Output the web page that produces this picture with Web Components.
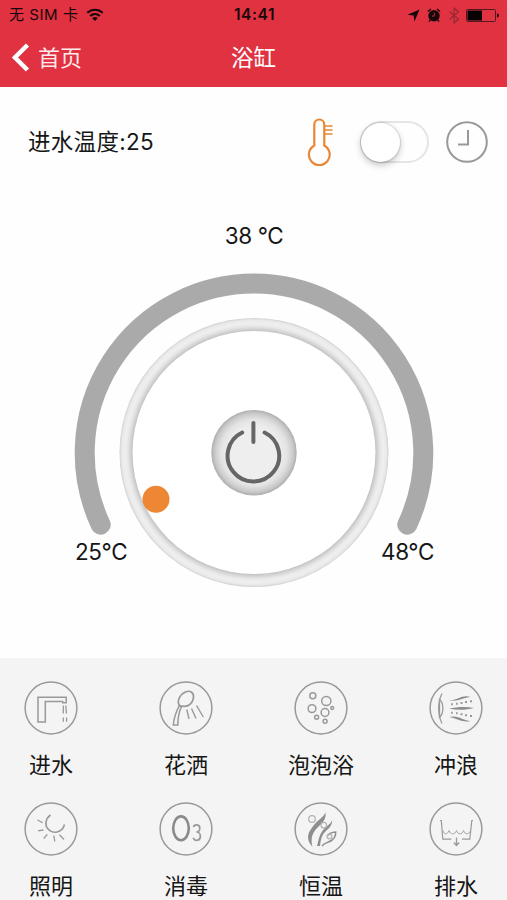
<!DOCTYPE html>
<html lang="zh-CN">
<head>
    <meta charset="UTF-8">
    <meta name="viewport" content="width=device-width, initial-scale=1.0">
    <title>浴缸</title>
    <style>
        body {
            margin: 0;
            background: #fff;
            overflow: hidden;
        }
    </style>
</head>
<body>
    <bath-app></bath-app>

    <script>
        // Small base: every component only has to give its markup and its styles
        class BaseElement extends HTMLElement {
            constructor() {
                super();
                this.attachShadow({ mode: 'open' });
            }
            render() {
                const template = document.createElement('template');
                template.innerHTML = `
                    <style>${this.getStyles()}</style>
                    ${this.getTemplate()}
                `;
                this.shadowRoot.replaceChildren(template.content.cloneNode(true));
            }
            connectedCallback() {
                this.render();
            }
        }

        // Glyphs inside the round buttons, drawn on a 54x54 box
        const icons = {
            faucet: `
                <path d="M14 41V16.300h28.200v5.500h-3.500v-1.300H21.300V41z" stroke-width="1.500"/>
                <path d="M39.300 24.500v8M41.800 24.500l.6 8M39.300 36.500v4.300M42.600 36.500v4.300"/>`,
            shower: `
                <path d="M20.500 24.500c-3.500-5 1.500-12 6.500-13.800 4.500-1.500 8 1 7.500 6-.6 5-5 9-9.500 8.700-2 0-3.500-.1-4.500-.9z" stroke-width="1.700"/>
                <path d="M20.300 24.500c-3 6-5.500 13-6 19.500h4.500c0-7 1-12.500 3.500-18z" stroke-width="1.500"/>
                <path d="M27.800 28.500l2.200 9.500M32.500 27.500l4.500 10M37.500 24.500l6.800 11.500" stroke-width="1.400"/>`,
            bubbles: `
                <g stroke-width="1.500">
                    <circle cx="18.800" cy="14.700" r="3"/><circle cx="32.300" cy="20" r="4.600"/>
                    <circle cx="18" cy="27.600" r="3.900"/><circle cx="31" cy="31.500" r="3.900"/>
                    <circle cx="38.200" cy="27" r="1.400"/><circle cx="22.600" cy="36.300" r="2"/>
                    <circle cx="31.100" cy="40.300" r="2"/>
                </g>`,
            surf: `
                <path d="M13 12.500c-4.500 9-4.500 20.500 0 30" stroke-width="1.200"/>
                <path d="M10.500 18.500c4.500 3.500 4.500 14 0 18z"/>
                <g fill="#8c8c8c" stroke="none">
                    <path d="M20 19c8 1 13-6 21.500-3-7 .2-12 5.300-21.500 3z"/>
                    <path d="M20 27.600c8-1.800 17-2.300 25-.6-8 2.200-17 2.300-25 .6z"/>
                    <path d="M20 36c9-2.500 14 3.500 21.500 4-7.500 2-13-2.500-21.500-4z"/>
                </g>
                <path d="M22 23.300h1.700M27 22.800h1.700M31.500 22h2M36 21h2M41 20.300h2M22 31.700h1.700M27 32.300h1.700M31.500 33.200h2M36 34.200h2M41 35h2" stroke-width="2"/>`,
            moon: `
                <path d="M26.500 13c-5 3.500-6 10-2.500 14 4.500 5 14 4.500 16.500-4.500" stroke-width="1.600"/>
                <path d="M13.500 18l5.200 2.800M14 28.800l5.500-.8M23.300 32.300l-3.500 4.200M29.800 33.500l1 6M35.500 32.800l4.500 4.700"/>`,
            ozone: `
                <ellipse cx="22" cy="26.300" rx="7.800" ry="11.900" stroke="#8a8a8a" stroke-width="2.600"/>
                <path d="M34.500 25c.8-3 6.300-3 6.300 1.200 0 2.500-1.800 3.800-3.400 3.800 2 0 4 1.500 4 4.200 0 5-6 5.300-7.200 1.600" stroke-width="1.700"/>`,
            heat: `
                <g fill="#8e8e8e" stroke="none">
                    <path d="M31.500 10.300c-1.500 5-8.500 8-12.500 14-3.500 4.500-5.500 8-4.700 13 .5 3 2 5.500 4.200 7.400-1.800-7-.8-12 3-17 5-5.500 11-8.500 10-17.400z"/>
                    <path d="M38.200 18c-1.500 4.500-6.700 6.500-9.900 11-3.500 5-3.800 10-5.300 15h3c.5-4 .8-8 3.300-12 3.200-4.500 9-6.500 8.900-14z"/>
                </g>
                <path d="M28 44c2.500-3.500 6-3.200 9.500-5.500 3-2 4.300-5 4.200-8.500-3.500.2-6.500 1.200-8.500 4" stroke="#8e8e8e" stroke-width="1.500"/>
                <g stroke="#b4b4b4">
                    <circle cx="18" cy="17" r="3.300"/><circle cx="29.800" cy="23.200" r="2.800"/><circle cx="35.500" cy="34.500" r="2.300"/>
                </g>`,
            drain: `
                <path d="M11 18.500h1.300l1.500 18.700h8.500M33 37.200h7.800l2-18.700h1.200" stroke-width="1.200"/>
                <path d="M14 28.500c1 4.500 4.500 4.500 6 0 1.500 4.500 6 4.500 7.500 0 1.500 4.500 5.500 4.500 7 0 1.500 4.500 5.500 4.500 7 0" stroke="#a8a8a8" stroke-width="1"/>
                <path d="M27.500 35.500v8M24.800 40.500l2.700 3 2.700-3"/>`
        };

        class StatusBar extends BaseElement {
            getTemplate() {
                return `
                    <div class="carrier">
                        <span>无 SIM 卡</span>
                        <svg width="18" height="14" viewBox="0 0 18 14" fill="none" stroke="#17070a" stroke-width="2.200">
                            <path d="M1.300 4.800c4.500-4.100 10.900-4.100 15.400 0M4.200 8c2.800-2.600 6.800-2.600 9.600 0"/>
                            <path d="M9 13L6.200 10.200c1.600-1.500 4-1.500 5.600 0z" fill="#17070a" stroke="none"/>
                        </svg>
                    </div>
                    <time>14:41</time>
                    <div class="system">
                        <svg width="13" height="13" viewBox="0 0 13 13"><path d="M12.500.5L7.500 12.500 6.600 6.600.5 5.800z" fill="#17070a"/></svg>
                        <svg width="14" height="14" viewBox="0 0 14 14">
                            <circle cx="7" cy="7.800" r="5.700" fill="#17070a"/>
                            <path d="M.9 3.600L4 .9M13.100 3.600L10 .9M3.300 12l-1.400 1.600M10.700 12l1.400 1.600" stroke="#17070a" stroke-width="1.300"/>
                            <path d="M7.300 4.800v3.300H5" fill="none" stroke="#c02b38" stroke-width="1"/>
                        </svg>
                        <svg width="10" height="17" viewBox="0 0 10 17" fill="none" stroke="#942934" stroke-width="1.200">
                            <path d="M.5 4.500l9 7.800L5 16V1l4.500 3.700-9 7.800"/>
                        </svg>
                        <svg width="34" height="13" viewBox="0 0 34 13">
                            <rect x=".5" y=".5" width="29" height="12" rx="1" fill="none" stroke="#541820"/>
                            <rect x="1.500" y="1.500" width="14.500" height="10" fill="#090304"/>
                            <path d="M31 4.500c2.600.3 2.600 3.700 0 4z" fill="#17070a"/>
                        </svg>
                    </div>
                `;
            }
            getStyles() {
                return `
                    :host {
                        display: grid;
                        grid-template-columns: 1fr auto 1fr;
                        align-items: center;
                        height: 30px;
                        padding: 0 7px 0 9px;
                        color: #17070a;
                        font-size: 15px;
                        line-height: 30px;
                    }
                    div { display: flex; align-items: center; }
                    .carrier { gap: 7.500px; }
                    .carrier span { letter-spacing: .55px; }
                    time { font-weight: 600; font-size: 15.500px; letter-spacing: .6px; }
                    .system { justify-content: flex-end; }
                    .system svg + svg { margin-left: 7.500px; }
                `;
            }
        }
        customElements.define('status-bar', StatusBar);

        class NavBar extends BaseElement {
            getTemplate() {
                return `
                    <div class="back">
                        <svg width="18" height="30" viewBox="0 0 18 30">
                            <path d="M15.500 2L3 14.500 15.500 27" fill="none" stroke="#fff" stroke-width="4.500"/>
                        </svg>
                        <slot name="back"></slot>
                    </div>
                    <h1><slot></slot></h1>
                `;
            }
            getStyles() {
                return `
                    :host {
                        display: grid;
                        grid-template-columns: 1fr auto 1fr;
                        align-items: center;
                        box-sizing: border-box;
                        height: 57px;
                        padding: 0 12px 2px;
                        color: #fff;
                        font-size: 22.500px;
                        line-height: 30px;
                    }
                    .back { display: flex; align-items: center; gap: 8px; color: #fdeaec; font-size: 22px; }
                    h1 { margin: 0; font-size: inherit; font-weight: 400; }
                `;
            }
        }
        customElements.define('nav-bar', NavBar);

        class ToggleSwitch extends BaseElement {
            getTemplate() {
                return `<span></span>`;
            }
            getStyles() {
                return `
                    :host {
                        display: block;
                        box-sizing: border-box;
                        width: 69px;
                        height: 42px;
                        border: 2px solid #e5e5e5;
                        border-radius: 21px;
                    }
                    span {
                        display: block;
                        width: 39px;
                        height: 39px;
                        margin: -.5px 0 0 -1px;
                        border-radius: 50%;
                        background: #fff;
                        box-shadow: 0 0 1px 1px rgba(0, 0, 0, .12), 0 3px 7px rgba(0, 0, 0, .24);
                    }
                `;
            }
        }
        customElements.define('toggle-switch', ToggleSwitch);

        class InletRow extends BaseElement {
            getTemplate() {
                return `
                    <p><slot></slot></p>
                    <svg class="thermo" width="28" height="50" viewBox="0 0 28 50" fill="none" stroke="#e88735" stroke-width="2.200">
                        <path d="M7.300 28.500V7.500a5 5 0 0 1 10 0v21a10.400 10.400 0 1 1-10 0z"/>
                        <path d="M18 9h7.500M18 13h7.500M18 17h7.500" stroke-width="1.700"/>
                    </svg>
                    <toggle-switch></toggle-switch>
                    <svg class="clock" width="42" height="42" viewBox="0 0 42 42" fill="none" stroke="#999" stroke-width="2">
                        <circle cx="21" cy="21" r="19.800"/>
                        <path d="M22 9v14.500h-10"/>
                    </svg>
                `;
            }
            getStyles() {
                return `
                    :host {
                        display: flex;
                        align-items: center;
                        height: 50px;
                        padding: 30px 19px 0 28px;
                    }
                    p { flex: 1; margin: 0; font-size: 22.500px; line-height: 30px; letter-spacing: .3px; }
                    .thermo { margin-right: 25px; }
                    .clock { margin-left: 17px; }
                `;
            }
        }
        customElements.define('inlet-row', InletRow);

        class TempDial extends BaseElement {
            getTemplate() {
                return `
                    <output><slot></slot></output>
                    <div class="dial">
                        <svg width="360" height="315" viewBox="74 273 360 315">
                            <defs>
                                <radialGradient id="ring" gradientUnits="userSpaceOnUse" cx="254" cy="452.500" r="134.500">
                                    <stop offset=".895" stop-color="#b5b5b5"/>
                                    <stop offset=".912" stop-color="#cdcdcd"/>
                                    <stop offset=".94" stop-color="#e7e7e7"/>
                                    <stop offset=".96" stop-color="#efefef"/>
                                    <stop offset=".985" stop-color="#e9e9e9"/>
                                    <stop offset="1" stop-color="#cfcfcf"/>
                                </radialGradient>
                                <radialGradient id="knob">
                                    <stop offset=".6" stop-color="#eee"/>
                                    <stop offset=".78" stop-color="#e3e3e3"/>
                                    <stop offset=".92" stop-color="#c9c9c9"/>
                                    <stop offset="1" stop-color="#adadad"/>
                                </radialGradient>
                            </defs>
                            <path d="M100.700 524.700A169.300 169.300 0 1 1 407.300 524.700" fill="none" stroke="#aaa" stroke-width="20" stroke-linecap="round"/>
                            <circle cx="254" cy="452.500" r="134.500" fill="url(#ring)"/>
                            <circle cx="254" cy="452.500" r="121.500" fill="#fff"/>
                            <circle cx="156" cy="499.300" r="13.500" fill="#ee8733"/>
                            <circle cx="254" cy="452.700" r="42.700" fill="url(#knob)"/>
                            <g fill="none" stroke="#666" stroke-width="4" stroke-linecap="round">
                                <path d="M242.200 432.500A25.800 25.800 0 1 0 264.600 432.500"/>
                                <path d="M253.400 423v19"/>
                            </g>
                        </svg>
                        <div class="range">
                            <slot name="min"></slot>
                            <slot name="max"></slot>
                        </div>
                    </div>
                `;
            }
            getStyles() {
                return `
                    :host {
                        display: flex;
                        flex-direction: column;
                        align-items: center;
                        gap: 22px;
                        padding-top: 54px;
                        font-size: 22.500px;
                        line-height: 30px;
                        letter-spacing: -.4px;
                    }
                    output { padding-left: 1px; }
                    .dial { display: grid; width: 360px; margin-left: 1px; }
                    svg, .range { grid-area: 1 / 1; }
                    .range {
                        display: flex;
                        justify-content: space-between;
                        align-self: end;
                        padding: 0 0 21px 1px;
                    }
                `;
            }
        }
        customElements.define('temp-dial', TempDial);

        class FeatureButton extends BaseElement {
            getTemplate() {
                return `
                    <svg width="54" height="54" viewBox="0 0 54 54" fill="none" stroke="#999" stroke-width="1.300">
                        <circle cx="27" cy="27" r="25.900" stroke-width="1.500"/>
                        ${icons[this.getAttribute('icon')]}
                    </svg>
                    <slot></slot>
                `;
            }
            getStyles() {
                return `
                    :host {
                        display: flex;
                        flex-direction: column;
                        align-items: center;
                        gap: 15px;
                        width: 66px;
                        font-size: 22px;
                        line-height: 30px;
                        white-space: nowrap;
                    }
                    svg { flex: none; }
                `;
            }
        }
        customElements.define('feature-button', FeatureButton);

        class FeatureGrid extends BaseElement {
            getTemplate() {
                return `<slot></slot>`;
            }
            getStyles() {
                return `
                    :host {
                        display: grid;
                        grid-template-columns: repeat(4, 66px);
                        justify-content: space-between;
                        align-content: start;
                        row-gap: 22px;
                        padding: 23.500px 18px 0;
                        background: #f4f4f4;
                    }
                `;
            }
        }
        customElements.define('feature-grid', FeatureGrid);

        class BathApp extends BaseElement {
            getTemplate() {
                return `
                    <header>
                        <status-bar></status-bar>
                        <nav-bar><span slot="back">首页</span>浴缸</nav-bar>
                    </header>
                    <main>
                        <inlet-row>进水温度:25</inlet-row>
                        <temp-dial>38 °C<span slot="min">25°C</span><span slot="max">48°C</span></temp-dial>
                    </main>
                    <feature-grid>
                        <feature-button icon="faucet">进水</feature-button>
                        <feature-button icon="shower">花洒</feature-button>
                        <feature-button icon="bubbles">泡泡浴</feature-button>
                        <feature-button icon="surf">冲浪</feature-button>
                        <feature-button icon="moon">照明</feature-button>
                        <feature-button icon="ozone">消毒</feature-button>
                        <feature-button icon="heat">恒温</feature-button>
                        <feature-button icon="drain">排水</feature-button>
                    </feature-grid>
                `;
            }
            getStyles() {
                return `
                    :host {
                        display: grid;
                        grid-template-rows: 87px 570.500px 1fr;
                        height: 900px;
                        overflow: hidden;
                        background: #fefefe;
                        color: #161616;
                        font-family: Inter, "Noto Sans CJK SC", sans-serif;
                    }
                    header { background: #e03241; }
                `;
            }
        }
        customElements.define('bath-app', BathApp);
    </script>
</body>
</html>
